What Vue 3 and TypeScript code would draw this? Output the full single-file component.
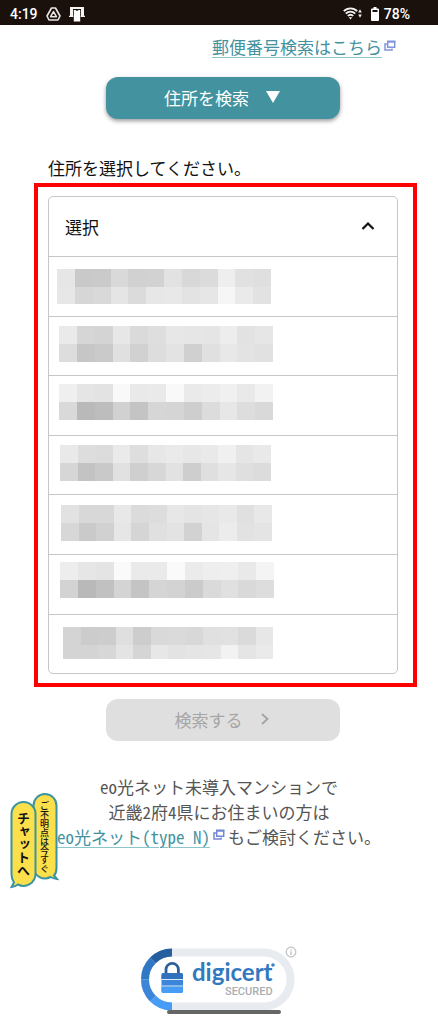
<script setup lang="ts">
import { ref } from 'vue'

interface Mosaic {
  x: number
  y: number
  w: number
  split: number
  h: number
  top: string[]
  bottom: string[]
}

const shades = (s: string): string[] => s.split(' ').map((v) => '#' + v + v + v)

const options: Mosaic[] = [
  { x: 8, y: 12, w: 214, split: 18, h: 35, top: shades('e6 c9 ca d9 d1 d2 e2 d8 db ee e1 df'), bottom: shades('e7 d6 d9 e5 db e7 e8 e3 e6 f6 ea e2') },
  { x: 10, y: 9, w: 214, split: 18, h: 36, top: shades('ea d6 d4 e7 da de e7 e6 e5 ed e2 e6'), bottom: shades('dd c6 ca e0 d1 dd e3 d0 e0 e8 e3 e1') },
  { x: 10, y: 8, w: 214, split: 18, h: 36, top: shades('ef e5 e3 f9 e9 ea f9 ea ec f0 e9 f2'), bottom: shades('d9 b9 bd d1 c4 d6 d5 ce dc e7 dd d9') },
  { x: 11, y: 9, w: 211, split: 18, h: 36, top: shades('e9 dd dc ea de e7 ea e7 e9 f0 e5 e9'), bottom: shades('d6 c3 c9 e1 cf d7 e2 ce df e6 df dc') },
  { x: 12, y: 10, w: 211, split: 18, h: 36, top: shades('e2 d8 d8 e8 db dd e7 e4 e6 e9 e0 e8'), bottom: shades('d7 ca d1 e6 d5 e0 e3 d2 e5 ec e2 e4') },
  { x: 11, y: 7, w: 214, split: 18, h: 36, top: shades('ed e6 e4 fa ea ea fa eb ee ef e9 f4'), bottom: shades('d3 b9 c1 d4 c4 d5 d3 cb da e0 d9 dd') },
  { x: 14, y: 12, w: 210, split: 18, h: 32, top: shades('d4 cc cd df cd d9 da d8 e0 e1 da e7'), bottom: shades('d4 d4 d7 e4 d5 e7 e3 e5 e6 f2 e5 ea') },
]

const edge = (m: Mosaic, i: number): number => m.x + Math.round((m.w * i) / 12)

const selected = ref(-1)
</script>

<template>
  <div class="page">
    <header class="status">
      <div class="group">
        <span>4:19</span>
        <svg class="i-drive" width="15" height="14" viewBox="0 0 15 14" fill="none" stroke="#e9e5e2" stroke-linejoin="round">
          <path d="M5.5 1h4L14 9l-2 4H3L1 9z" stroke-width="1.6" />
          <path d="M7.5 4.7 10.4 9.7H4.6z" stroke-width="1.6" />
        </svg>
        <svg class="i-shirt" width="16" height="16" viewBox="0 0 16 16">
          <path d="M1 1h14v9h-3V3H4v7H1z" fill="#f5f3f1" />
          <path d="M4.800 4h1.500L8 5l1.700-1h1.500v11.500H4.800z" fill="#fff" />
          <path d="M0 10.300h4.300M11.700 10.300H16" stroke="#f5f3f1" stroke-width="1.200" />
        </svg>
      </div>
      <div class="group right">
        <svg width="20" height="14" viewBox="0 0 20 14" fill="none" stroke="#f5f3f1">
          <path d="M.8 4.200C4.500.4 10.500.4 14.200 4.200M2.800 6.600c2.700-2.700 6.700-2.700 9.400 0M4.800 8.900c1.600-1.500 3.800-1.500 5.400 0" stroke-width="1.900" />
          <path d="M5.700 10.200h3.600L7.500 12.600z" fill="#f5f3f1" stroke="none" />
          <path d="M15.200 5.500 17 2.300l1.800 3.200zM15.200 7.500 17 10.700l1.800-3.200z" fill="#f5f3f1" stroke="none" />
        </svg>
        <svg width="8" height="14" viewBox="0 0 8 14">
          <path d="M2.500 0h3v1.500H7a1 1 0 0 1 1 1V13a1 1 0 0 1-1 1H1a1 1 0 0 1-1-1V2.500a1 1 0 0 1 1-1h1.500z" fill="#fff" />
          <path d="M1.500 3h5v2h-5z" fill="#1a110d" />
        </svg>
        <span class="pct">78%</span>
      </div>
    </header>

    <main class="content">
      <div class="postal">
        <a class="link" href="#postal">郵便番号検索はこちら</a>
        <svg class="ext" width="12" height="12" viewBox="0 0 12 12" fill="none" stroke="#8294da">
          <path d="M3 4H1v6h7V8.500" stroke-width="1.500" />
          <path d="M3.700 1.700h7v5.600h-7z" stroke-width="1.500" /><path d="M3 1.500h8.400" stroke-width="2" />
        </svg>
      </div>

      <button class="btn primary" type="button">
        住所を検索
        <svg width="14" height="12" viewBox="0 0 14 12"><path d="M0 0h14L7 12z" fill="#fff" /></svg>
      </button>

      <p id="pick" class="label">住所を選択してください。</p>
    </main>

    <section class="frame">
      <div class="picker">
        <button class="head" type="button" aria-expanded="true" aria-describedby="pick">
          選択
          <svg width="14" height="10" viewBox="0 0 14 10" fill="none" stroke="#111" stroke-width="2.200"><path d="M1.500 8 7 2.500 12.500 8" /></svg>
        </button>
        <ul class="list" role="listbox" aria-labelledby="pick">
          <li v-for="(m, n) in options" :key="n" role="option" :aria-selected="selected === n" @click="selected = n">
            <svg width="240" height="56" viewBox="0 0 240 56" shape-rendering="crispEdges">
              <template v-for="(c, i) in m.top" :key="i">
                <rect :x="edge(m, i)" :y="m.y" :width="edge(m, i + 1) - edge(m, i)" :height="m.split" :fill="c" />
                <rect :x="edge(m, i)" :y="m.y + m.split" :width="edge(m, i + 1) - edge(m, i)" :height="m.h - m.split" :fill="m.bottom[i]" />
              </template>
            </svg>
          </li>
        </ul>
      </div>
    </section>

    <section class="content">
      <button class="btn search" type="button" disabled>
        検索する
        <svg width="10" height="14" viewBox="0 0 10 14" fill="none" stroke="#a3a3a3" stroke-width="1.800"><path d="M2 2l5.500 5L2 12" /></svg>
      </button>
    </section>

    <p class="note">
      eo光ネット未導入マンションで<br />
      近畿2府4県にお住まいの方は<br />
      <a class="link" href="#type-n">eo光ネット(type N)</a><svg class="ext" width="12" height="12" viewBox="0 0 12 12" fill="none" stroke="#7388d4">
        <path d="M3 4H1v6h7V8.500" stroke-width="1.500" />
        <path d="M3.700 1.700h7v5.600h-7z" stroke-width="1.500" /><path d="M3 1.500h8.400" stroke-width="2" />
      </svg>もご検討ください。
    </p>

    <footer class="seal">
      <svg width="156" height="66" viewBox="0 0 156 66" role="img" aria-label="digicert secured">
        <rect x="4" y="6.500" width="145.500" height="54" rx="27" fill="#fff" stroke="#e8ecf1" stroke-width="8" />
        <g fill="none" stroke-width="8">
          <path d="M31 6.500a27 27 0 0 0-19.100 7.900" stroke="#245f9f" />
          <path d="M11.900 14.400A27 27 0 0 0 4 33.500" stroke="#3077c4" />
          <path d="M4 33.500a27 27 0 0 0 7.900 19.100" stroke="#3b86d8" />
          <path d="M11.900 52.600A27 27 0 0 0 31 60.500" stroke="#479cf5" />
        </g>
        <path d="M25 28v-4.500a6.200 6.200 0 0 1 12.400 0V28" fill="none" stroke="#2c5f9b" stroke-width="2.800" />
        <rect x="20.500" y="27" width="21.500" height="20" rx="2" fill="#3b86d8" />
        <path d="M20.500 33v-4a2 2 0 0 1 2-2H40a2 2 0 0 1 2 2v4z" fill="#3172bd" />
        <path d="M20.500 41H42v4a2 2 0 0 1-2 2H22.500a2 2 0 0 1-2-2z" fill="#479cf5" />
        <path d="M20.500 33.500H42M20.500 40H42" stroke="#d9e9fa" stroke-width="1" />
        <text x="51" y="35" class="brand">digicert</text>
        <circle cx="132" cy="19" r="1.800" fill="#3c83c8" />
        <text x="84" y="49" class="secured">SECURED</text>
        <circle cx="150" cy="6" r="4.800" fill="#fff" stroke="#bfc3c8" stroke-width="1.300" />
        <path d="M150 3.200v1.200M150 5.300v3.600" stroke="#bfc3c8" stroke-width="1.300" />
      </svg>
    </footer>

    <button class="chat" type="button">
      <svg width="50" height="97" viewBox="0 0 50 97" fill="#fbdf4b" stroke="#3b94a0" stroke-width="2">
        <path d="M35 2a11.500 11.500 0 0 1 11.500 11.500V76q0 5-2.500 7.500l3 3.500q-4-.5-6.500-2A11.500 11.500 0 0 1 23.500 76V13.500A11.500 11.500 0 0 1 35 2z" />
        <path d="M13.500 10A12 12 0 0 1 25.500 22v60A12 12 0 0 1 8 92.500Q5.500 94.500 1.500 95L4 90.500Q1.500 87 1.500 82V22a12 12 0 0 1 12-12z" />
      </svg>
      <span class="big">チャットへ</span>
      <span class="small">ご不明点は今すぐ</span>
    </button>
    <div class="handle"></div>
  </div>
</template>

<style>
body {
  margin: 0;
  background: #fff;
}
</style>

<style scoped>
.page {
  position: relative;
  min-height: 100vh;
  overflow: hidden;
  background: #fff;
  color: #111;
  font: 17px/25px "Noto Sans CJK JP", sans-serif;
  font-feature-settings: "hwid";
}
button {
  font: inherit;
  cursor: pointer;
}
.status {
  display: flex;
  justify-content: space-between;
  align-items: center;
  box-sizing: border-box;
  height: 25px;
  padding: 2px 28px 0 10px;
  background: #1a110d;
  color: #fff;
  font: 500 14px/20px Roboto, sans-serif;
  font-feature-settings: normal;
}
.group {
  display: flex;
  align-items: center;
  gap: 8px;
}
.pct {
  margin-left: -3px;
}
.content {
  display: flex;
  flex-direction: column;
  padding: 0 40px 0 48px;
}
.postal {
  display: flex;
  justify-content: flex-end;
  gap: 2px;
  padding: 9px 2px 0 0;
}
.postal .ext {
  margin-top: 6px;
}
.link {
  color: #42929e;
  text-decoration: underline;
  text-decoration-color: #8cc4cb;
  text-decoration-thickness: 1px;
  text-underline-offset: 3px;
}
.btn {
  display: flex;
  justify-content: center;
  align-items: center;
  gap: 17px;
  box-sizing: border-box;
  align-self: center;
  width: 67%;
  height: 42px;
  padding: 0 2px 2px 0;
  border: 0;
  border-radius: 12px;
}
.primary {
  margin-top: 18px;
  background: #42939f;
  color: #fff;
  box-shadow: 0 2px 4px rgba(0, 0, 0, 0.4);
}
.label {
  margin: 36px 0 3px;
}
.frame {
  margin: 0 21px 0 34px;
  padding: 9px 15px 9px 10px;
  border: 4px solid #fe0000;
}
.picker {
  border: 1px solid #c6c6c6;
  border-radius: 5px;
}
.head {
  display: flex;
  justify-content: space-between;
  align-items: center;
  box-sizing: border-box;
  width: 100%;
  height: 60px;
  padding: 0 22px 1px 16px;
  border: 0;
  border-bottom: 1px solid #c6c6c6;
  background: none;
  color: #111;
}
.list {
  margin: 0;
  padding: 0;
  list-style: none;
}
.list li {
  box-sizing: border-box;
  height: 60px;
  overflow: hidden;
  border-bottom: 1px solid #c6c6c6;
}
.list li:nth-child(2),
.list li:nth-child(4) {
  height: 59px;
}
.list li:last-child {
  height: 58px;
  border-bottom: 0;
}
.list svg {
  display: block;
}
.search {
  margin-top: 12px;
  background: #dfdfdf;
  color: #a6a6a6;
}
.note {
  margin: 33px 0 0;
  text-align: center;
  white-space: nowrap;
  color: #555;
}
.note .ext {
  margin: 0 3px 3px;
}
.seal {
  display: flex;
  justify-content: center;
  margin-top: 97px;
}
.brand {
  fill: #3279c0;
  font: 700 24px Lato, sans-serif;
  font-feature-settings: normal;
}
.secured {
  fill: #a9adb2;
  font: 500 11px Roboto, sans-serif;
  font-feature-settings: normal;
}
.chat {
  position: absolute;
  left: 10px;
  top: 792px;
  padding: 0;
  border: 0;
  background: none;
  color: #111;
  text-align: left;
}
.chat svg {
  display: block;
}
.chat span {
  position: absolute;
  writing-mode: vertical-rl;
  white-space: nowrap;
  font-weight: 700;
}
.big {
  left: 3px;
  top: 20px;
  font-size: 13px;
  line-height: 20px;
}
.chat .small {
  left: 25px;
  top: 9px;
  font-size: 9px;
  font-weight: 500;
  line-height: 18px;
}
.handle {
  position: absolute;
  bottom: 10px;
  left: calc(50% - 52px);
  width: 114px;
  height: 4px;
  border-radius: 2px;
  background: #666;
}
</style>
